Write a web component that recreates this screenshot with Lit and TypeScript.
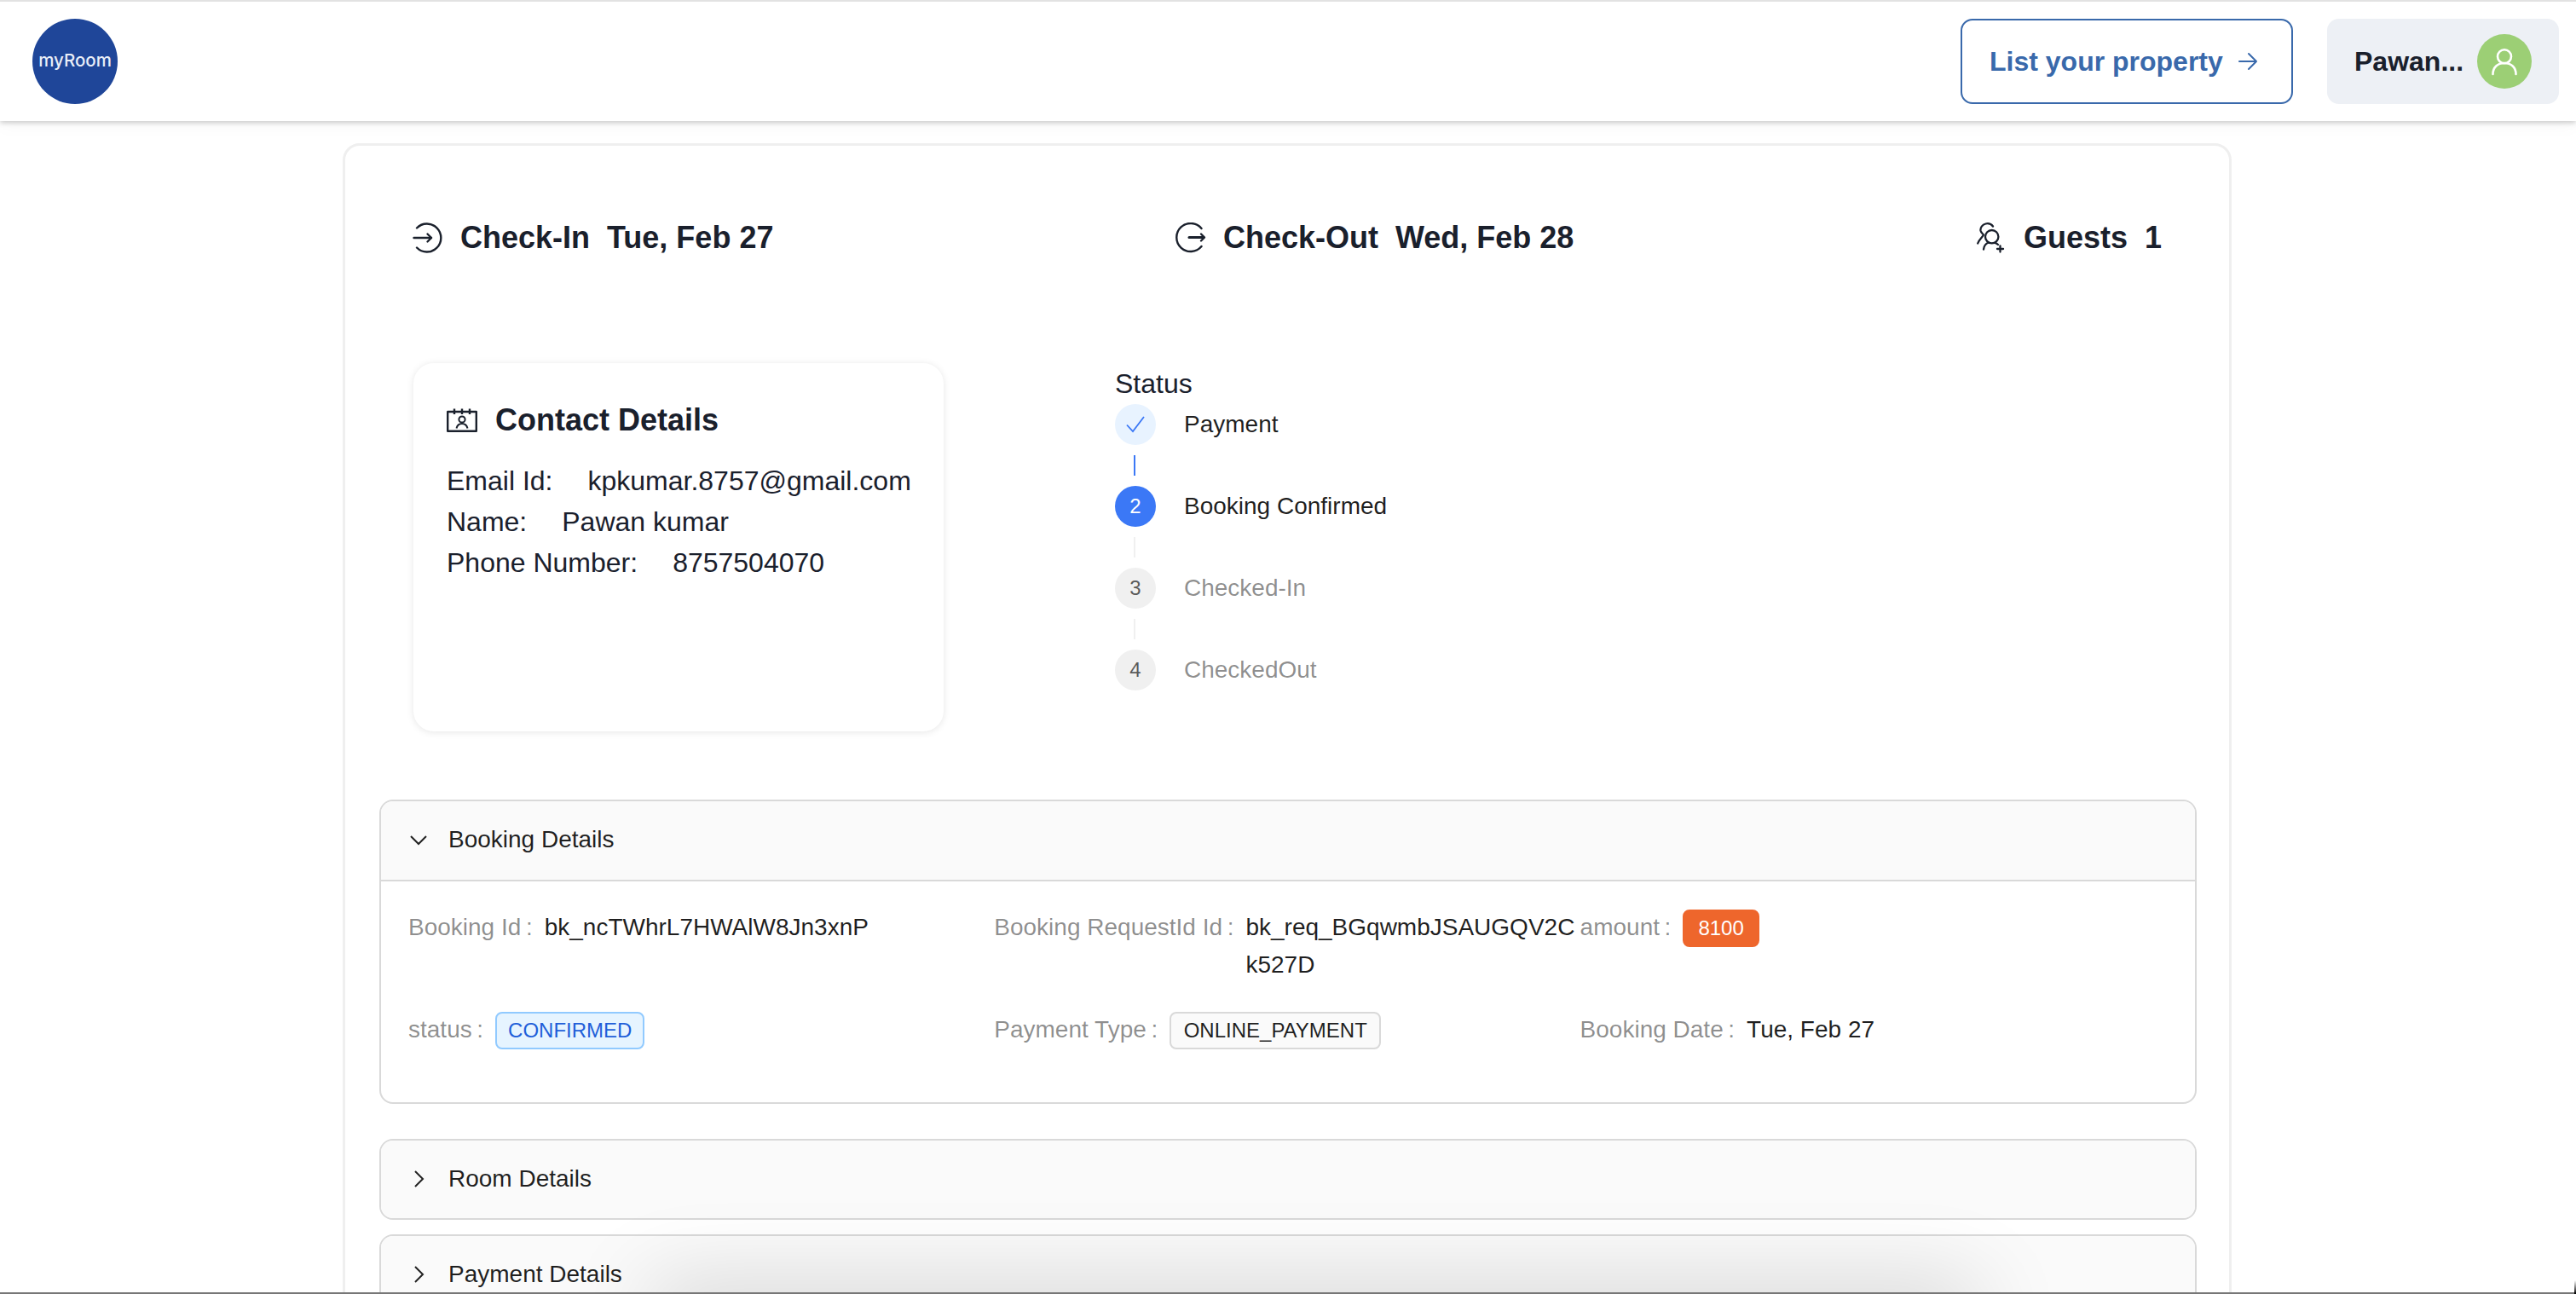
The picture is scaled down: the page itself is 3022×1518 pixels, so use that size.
import { LitElement, html, css, svg } from "lit";
import { customElement } from "lit/decorators.js";

const iconIn = html`<svg class="ic" viewBox="0 0 36 36" fill="none" stroke="currentColor" stroke-width="2.4" stroke-linecap="round" stroke-linejoin="round"><path d="M5 6.500A16.500 16.500 0 1 1 5 29.500"/><path d="M1.500 18H22"/><path d="M17.500 13.500 22 18l-4.500 4.500"/></svg>`;
const iconOut = html`<svg class="ic" viewBox="0 0 36 36" fill="none" stroke="currentColor" stroke-width="2.400" stroke-linecap="round" stroke-linejoin="round"><path d="M30.500 7A16.500 16.500 0 1 0 30.500 28"/><path d="M16 17.500H33" stroke-width="3"/><path d="M30 13.500 34 17.500l-4 4" stroke-width="2.400"/></svg>`;
const iconGuests = html`<svg class="ic" viewBox="0 0 34 36" fill="none" stroke="currentColor" stroke-width="2.300" stroke-linecap="round" stroke-linejoin="round"><path d="M19 4.500C17 1.800 13.500.8 10.500 1.500 6.500 2.500 4 6 4.500 9.500 5 12 7 13.500 8 14.500 6 18 2.500 20 1.200 24.500"/><circle cx="17.700" cy="16.700" r="7.700"/><path d="M8 31.500C8.500 27.500 11 24.500 14 23.500"/><path d="M21.500 23.800C23 24.300 24 25 25 26"/><path d="M27.500 27.500V34.500M24 31H31"/></svg>`;
const iconContact = html`<svg class="ic2" viewBox="0 0 36 28" fill="none" stroke="currentColor" stroke-width="2.400" stroke-linejoin="round"><path d="M1.200 4H34.800V26.800H1.200Z"/><path d="M9 .5V7M18 .5V7M27 .5V7"/><circle cx="18" cy="13" r="3.600" stroke-width="2"/><path d="M11.500 23.500c.8-3.500 3.500-5.500 6.500-5.500s5.700 2 6.500 5.500" stroke-width="2"/></svg>`;

@customElement("app-root")
export class AppRoot extends LitElement {
  static styles = css`
    :host { display: flex; flex-direction: column; height: 1518px; overflow: hidden; position: relative; background: #fff; color: #1a202c; font-family: "Liberation Sans", Arial, sans-serif; }
    * { box-sizing: border-box; }
    header { flex: none; height: 142px; border-top: 2px solid #e2e2e2; background: #fff; display: flex; align-items: center; padding: 0 20px 0 38px; box-shadow: 0 2px 6px rgba(0,0,0,.2), 0 6px 20px rgba(0,0,0,.03); position: relative; z-index: 1; }
    .logo { width: 100px; height: 100px; border-radius: 50%; background: #1f4699; color: #e9eef8; display: flex; align-items: center; justify-content: center; padding-bottom: 3px; font-size: 20.500px; font-family: Inter, "Liberation Sans", sans-serif; font-weight: 500; }
    .grow { flex: 1; }
    .list { width: 390px; height: 100px; border: 2.500px solid #3969ab; border-radius: 14px; color: #3969ab; font-size: 32px; font-weight: 700; display: flex; align-items: center; gap: 17px; padding-left: 32px; margin-right: 40px; }
    .list svg { width: 24px; height: 24px; }
    .user { width: 272px; height: 100px; background: #edf0f5; border-radius: 14px; display: flex; align-items: center; padding-left: 32px; gap: 17px; font-size: 32px; font-weight: 700; }
    .user .name { width: 127px; }
    .avatar { width: 64px; height: 64px; border-radius: 50%; background: #9ccf75; display: flex; align-items: center; justify-content: center; }
    .avatar svg { width: 36px; height: 36px; }
    main { flex: none; align-self: flex-start; margin: 26px 0 0 402px; width: 2216px; height: 1800px; border: 3.500px solid #efefef; border-radius: 20px; padding: 0 38px 0 40px; }
    .dates { display: flex; justify-content: space-between; align-items: center; padding: 0 41px 0 39px; height: 108px; margin-top: 53.500px; font-size: 36px; font-weight: 700; }
    .dates > div { display: flex; align-items: center; gap: 20px; white-space: pre; }
    .ic { width: 36px; height: 36px; display: block; }
    .ic2 { width: 36px; height: 28px; display: block; }
    .info { display: flex; padding: 0 39px; margin-top: 93px; }
    .contact { margin-left: 1px; width: 622px; height: 432px; border-radius: 24px; padding: 43.500px 40px 0 39px; box-shadow: 0 1px 8px rgba(0,0,0,.1); font-size: 32px; }
    .contact h2 { margin: 0 0 22.500px; font-size: 36px; line-height: 48px; font-weight: 700; display: flex; align-items: center; gap: 21px; }
    .contact p { margin: 0; line-height: 48px; white-space: pre; }
    .contact p span { margin-right: 41px; }
    .status { margin-left: 201px; padding-top: 6px; }
    .status .t { font-size: 32px; line-height: 36px; margin-bottom: 6px; }
    .steps { display: flex; flex-direction: column; }
    .step { display: flex; align-items: center; height: 48px; gap: 33px; font-size: 28px; color: rgba(0,0,0,.88); }
    .step.off { color: rgba(0,0,0,.45); }
    .num { width: 48px; height: 48px; border-radius: 50%; display: flex; align-items: center; justify-content: center; background: #f0f0f0; color: rgba(0,0,0,.65); font-size: 24px; }
    .num.done { background: #e8f3ff; }
    .num.done svg { width: 24px; height: 24px; }
    .num.cur { background: #3b78f6; color: #fff; }
    .conn { width: 2px; height: 24px; margin: 12px 0 12px 22px; background: #f0f0f0; }
    .conn.on { background: #3b78f6; }
    .acc { border: 2px solid #d9d9d9; border-radius: 16px; overflow: hidden; }
    .accs { margin-top: 80px; display: flex; flex-direction: column; gap: 17px; }
    .acc.open { margin-bottom: 24px; }
    .acc .h { height: 91px; background: #fafafa; display: flex; align-items: center; padding-left: 32px; gap: 23px; font-size: 28px; color: rgba(0,0,0,.88); }
    .acc .h svg { width: 24px; height: 24px; flex: none; }
    .acc.open .h { height: 94px; padding-bottom: 1px; border-bottom: 2px solid #d9d9d9; }
    .body { height: 259px; padding: 32px 31px 0 32px; display: grid; grid-template-columns: repeat(3, 687.300px); grid-auto-rows: min-content; row-gap: 32px; font-size: 28px; line-height: 44px; }
    .cell { display: flex; align-items: baseline; }
    .l { color: rgba(0,0,0,.45); flex: none; margin-right: 14px; }
    .v { color: rgba(0,0,0,.88); word-break: break-all; min-width: 0; }
    .tag { display: inline-block; height: 44px; line-height: 40px; border: 2px solid #d9d9d9; background: #fafafa; border-radius: 8px; padding: 0 14.500px; font-size: 24px; color: rgba(0,0,0,.88); word-break: normal; }
    .tag.blue { background: #e6f4ff; border-color: #91caff; color: #1f5fd9; padding: 0 13px; }
    .tag.org { background: #ee662c; border-color: #ee662c; color: #fff; padding: 0 16px; }
    .veil { position: absolute; left: 0; right: 0; bottom: 0; height: 110px; pointer-events: none; overflow: hidden; }
    .veil::before { content: ""; position: absolute; left: 773px; width: 1537px; bottom: -50px; height: 50px; background: #000; box-shadow: 0 0 100px 10px rgba(0,0,0,.17); }
    .edge { position: absolute; left: 0; right: 0; bottom: 0; height: 2px; background: #777; }
    .notch { position: absolute; right: 0; bottom: 0; width: 2px; height: 16px; background: linear-gradient(to bottom, transparent, #000); }
  `;

  private row(label: string, value: unknown) {
    return html`<div class="cell"><span class="l">${label}&thinsp;:</span><span class="v">${value}</span></div>`;
  }

  render() {
    const right = svg`<path d="M8 3 17 12 8 21" fill="none" stroke="#222" stroke-width="2"/>`;
    const down = svg`<path d="M3 8 12 17 21 8" fill="none" stroke="#222" stroke-width="2"/>`;
    return html`
      <header>
        <div class="logo">myRoom</div>
        <div class="grow"></div>
        <div class="list">List your property
          <svg viewBox="0 0 24 24" fill="none" stroke="#3969ab" stroke-width="2" stroke-linecap="round" stroke-linejoin="round"><path d="M2 12H22M13 3l9 9-9 9"/></svg>
        </div>
        <div class="user"><span class="name">Pawan...</span>
          <div class="avatar"><svg viewBox="0 0 36 36" fill="none" stroke="#fff" stroke-width="2.600" stroke-linecap="round"><circle cx="18" cy="12.300" r="8"/><path d="M4.500 33c0-8 5.500-13 13.500-13s13.500 5 13.500 13"/></svg></div>
        </div>
      </header>
      <main>
        <div class="dates">
          <div>${iconIn}<span>Check-In  Tue, Feb 27</span></div>
          <div>${iconOut}<span>Check-Out  Wed, Feb 28</span></div>
          <div>${iconGuests}<span>Guests  1</span></div>
        </div>
        <div class="info">
          <div class="contact">
            <h2>${iconContact}Contact Details</h2>
            <p><span>Email Id:</span>kpkumar.8757@gmail.com</p>
            <p><span>Name:</span>Pawan kumar</p>
            <p><span>Phone Number:</span>8757504070</p>
          </div>
          <div class="status">
            <div class="t">Status</div>
            <div class="steps">
              <div class="step"><div class="num done"><svg viewBox="0 0 24 24" fill="none" stroke="#3b78f6" stroke-width="1.800"><path d="M2 12.500 9 20 22 3"/></svg></div>Payment</div>
              <div class="conn on"></div>
              <div class="step"><div class="num cur">2</div>Booking Confirmed</div>
              <div class="conn"></div>
              <div class="step off"><div class="num">3</div>Checked-In</div>
              <div class="conn"></div>
              <div class="step off"><div class="num">4</div>CheckedOut</div>
            </div>
          </div>
        </div>
        <div class="accs">
          <section class="acc open">
            <div class="h"><svg viewBox="0 0 24 24">${down}</svg>Booking Details</div>
            <div class="body">
              ${this.row("Booking Id", "bk_ncTWhrL7HWAlW8Jn3xnP")}
              ${this.row("Booking RequestId Id", "bk_req_BGqwmbJSAUGQV2Ck527D")}
              ${this.row("amount", html`<span class="tag org">8100</span>`)}
              ${this.row("status", html`<span class="tag blue">CONFIRMED</span>`)}
              ${this.row("Payment Type", html`<span class="tag">ONLINE_PAYMENT</span>`)}
              ${this.row("Booking Date", "Tue, Feb 27")}
            </div>
          </section>
          <section class="acc"><div class="h"><svg viewBox="0 0 24 24">${right}</svg>Room Details</div></section>
          <section class="acc"><div class="h"><svg viewBox="0 0 24 24">${right}</svg>Payment Details</div></section>
        </div>
      </main>
      <div class="veil"></div>
      <div class="edge"></div>
      <div class="notch"></div>
    `;
  }
}
